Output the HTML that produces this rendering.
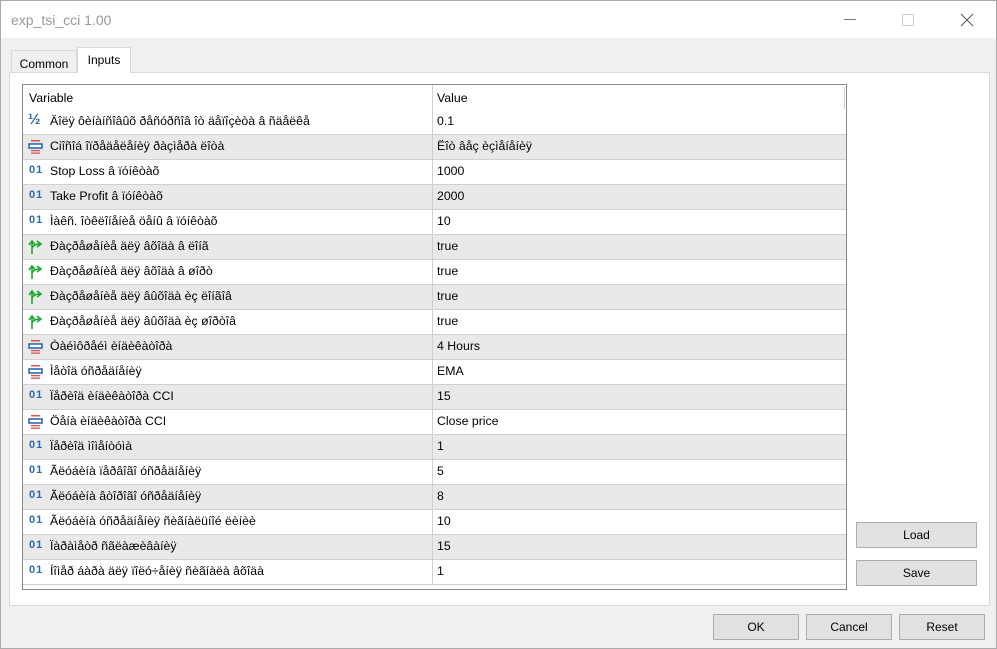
<!DOCTYPE html>
<html><head><meta charset="utf-8"><style>
*{margin:0;padding:0;box-sizing:border-box}
body{width:997px;height:649px;background:#f0f0f0;font-family:"Liberation Sans","DejaVu Sans",sans-serif;font-size:12px;color:#000;position:relative;overflow:hidden}
.win{position:absolute;left:0;top:0;width:997px;height:649px;border:1px solid #aaa;}
.title{position:absolute;left:0;top:0;width:995px;height:37px;background:#fff}
.title span{position:absolute;left:10px;top:11px;font-size:14px;color:#999}
.tab{position:absolute;top:48px;height:24px;border:1px solid #d9d9d9;border-bottom:none;background:#f0f0f0;font-size:12px;padding-top:5px;text-align:center}
.panel{position:absolute;left:8px;top:71px;width:981px;height:534px;background:#fff;border:1px solid #d9d9d9}
.grid{position:absolute;left:21px;top:83px;width:826px;height:506px;border:1px solid #888;background:#fff;overflow:hidden}
.row{position:absolute;left:0;width:823px;height:25px;border-bottom:1px solid #d0d0d0}
.row.g{background:#e9e9e9}
.row .n{position:absolute;left:27px;top:4px;white-space:nowrap;font-size:12.3px}
.row .v{position:absolute;left:414px;top:4px;font-size:12.3px}
.row .d{position:absolute;left:409px;top:0;width:1px;height:25px;background:#d0d0d0}
.ic{position:absolute;left:5px;top:4px;width:16px;height:16px}
.o1{position:absolute;left:6px;top:4px;color:#2a6ab0;font-size:11px;font-weight:bold;letter-spacing:1px}
.btn{position:absolute;height:26px;background:#e1e1e1;border:1px solid #adadad;text-align:center;padding-top:5px;font-size:12px}
</style></head><body><div class="win">
<div class="title"><span>exp_tsi_cci 1.00</span>
<div style="position:absolute;left:843px;top:18px;width:12px;height:1px;background:#777"></div>
<div style="position:absolute;left:901px;top:13px;width:12px;height:12px;border:1px solid #ccc"></div>
<svg style="position:absolute;left:959px;top:12px" width="14" height="14"><path d="M1 1L13 13M13 1L1 13" stroke="#555" stroke-width="1"/></svg>
</div>
<div class="tab" style="left:10px;width:66px;top:49px;height:23px;padding-top:6px">Common</div>
<div class="panel"></div>
<div class="tab" style="left:76px;width:54px;top:46px;height:26px;background:#fff;padding-top:5px">Inputs</div>
<div class="grid" style="width:825px">
<div class="row" style="top:0;height:25px;border-bottom:none"><span class="n" style="left:6px;top:6px">Variable</span><span class="v" style="top:6px">Value</span><div class="d"></div></div>
<div style="position:absolute;left:821px;top:2px;width:1px;height:22px;background:#ccc"></div>
</div>
<div id="rows" style="position:absolute;left:22px;top:109px"></div>
<div class="btn" style="left:855px;top:521px;width:121px">Load</div>
<div class="btn" style="left:855px;top:559px;width:121px">Save</div>
<div class="btn" style="left:712px;top:613px;width:86px">OK</div>
<div class="btn" style="left:805px;top:613px;width:86px">Cancel</div>
<div class="btn" style="left:898px;top:613px;width:86px">Reset</div>
</div>
<script>
var H='<span style="position:absolute;left:5px;top:1px;color:#2a6ab0;font-size:15px;font-weight:bold">½</span>';
var E='<svg class="ic" viewBox="0 0 16 16"><rect x="3" y="1" width="9" height="1.5" fill="#e05050"/><rect x="1" y="5" width="13" height="4" fill="#fff" stroke="#2a6ab0" stroke-width="1.6"/><rect x="3" y="11" width="9" height="1.3" fill="#e05050"/><rect x="3" y="13.5" width="9" height="1.3" fill="#e05050"/></svg>';
var B='<svg class="ic" viewBox="0 0 16 16"><path d="M4 15V3M1 6L4 2L7 6M4 9Q6 5 12 5M9 2L13 5L9 8" fill="none" stroke="#1aa830" stroke-width="1.6"/></svg>';
var O='<span class="o1">01</span>';
var d=[[H,"Äîëÿ ôèíàíñîâûõ ðåñóðñîâ îò äåïîçèòà â ñäåëêå","0.1"],[E,"Ciîñîá îïðåäåëåíèÿ ðàçìåðà ëîòà","Ëîò âåç èçìåíåíèÿ"],[O,"Stop Loss â ïóíêòàõ","1000"],[O,"Take Profit â ïóíêòàõ","2000"],[O,"Ìàêñ. îòêëîíåíèå öåíû â ïóíêòàõ","10"],[B,"Ðàçðåøåíèå äëÿ âõîäà â ëîíã","true"],[B,"Ðàçðåøåíèå äëÿ âõîäà â øîðò","true"],[B,"Ðàçðåøåíèå äëÿ âûõîäà èç ëîíãîâ","true"],[B,"Ðàçðåøåíèå äëÿ âûõîäà èç øîðòîâ","true"],[E,"Òàéìôðåéì èíäèêàòîðà","4 Hours"],[E,"Ìåòîä óñðåäíåíèÿ","EMA"],[O,"Ïåðèîä èíäèêàòîðà CCI","15"],[E,"Öåíà èíäèêàòîðà CCI","Close price"],[O,"Ïåðèîä ìîìåíòóìà","1"],[O,"Ãëóáèíà ïåðâîãî óñðåäíåíèÿ","5"],[O,"Ãëóáèíà âòîðîãî óñðåäíåíèÿ","8"],[O,"Ãëóáèíà óñðåäíåíèÿ ñèãíàëüíîé ëèíèè","10"],[O,"Ïàðàìåòð ñãëàæèâàíèÿ","15"],[O,"Íîìåð áàðà äëÿ ïîëó÷åíèÿ ñèãíàëà âõîäà","1"]];
var h='';d.forEach(function(r,i){h+='<div class="row'+(i%2?' g':'')+'" style="top:'+(i*25)+'px">'+r[0]+'<span class="n">'+r[1]+'</span><div class="d"></div><span class="v">'+r[2]+'</span></div>';});
document.getElementById('rows').innerHTML=h;
</script>
</body></html>
